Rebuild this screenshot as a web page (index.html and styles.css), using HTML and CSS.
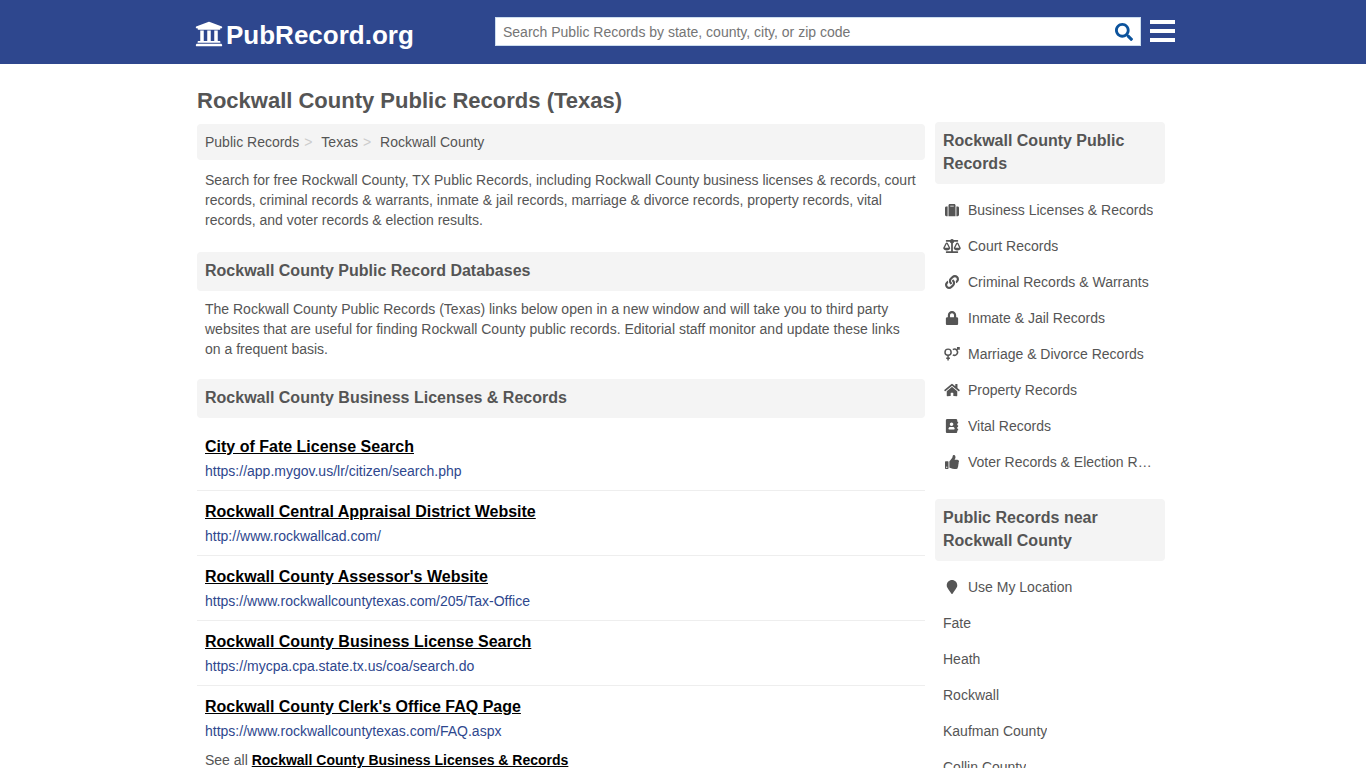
FILE: index.html
```html
<!DOCTYPE html>
<html lang="en">
<head>
  <title>Rockwall County Public Records (Texas)</title>
  <meta charset="UTF-8">
  <meta name="viewport" content="width=device-width, initial-scale=1.0">
  <link rel="stylesheet" href="styles.css">
</head>
<body>
  <header>
    <div class="container top">
      <a class="logo" href="#">
        <svg viewBox="0 0 512 512"><path d="M496 128v16a8 8 0 0 1-8 8h-24v12c0 6.627-5.373 12-12 12H60c-6.627 0-12-5.373-12-12v-12H24a8 8 0 0 1-8-8v-16a8 8 0 0 1 4.941-7.392l232-88a7.996 7.996 0 0 1 6.118 0l232 88A8 8 0 0 1 496 128zm-24 304H40c-13.255 0-24 10.745-24 24v16a8 8 0 0 0 8 8h464a8 8 0 0 0 8-8v-16c0-13.255-10.745-24-24-24zM96 192v192H60c-6.627 0-12 5.373-12 12v20h416v-20c0-6.627-5.373-12-12-12h-36V192h-64v192h-64V192h-64v192h-64V192H96z"/></svg>
        <span>PubRecord.org</span>
      </a>
      <form class="search">
        <input type="text" name="q" aria-label="Search Public Records" placeholder="Search Public Records by state, county, city, or zip code">
        <button type="button" aria-label="Search">
          <svg viewBox="0 0 512 512"><path d="M505 442.7L405.3 343c-4.5-4.5-10.6-7-17-7H372c27.600-35.300 44-79.700 44-128C416 93.100 322.900 0 208 0S0 93.100 0 208s93.100 208 208 208c48.300 0 92.700-16.400 128-44v16.300c0 6.400 2.500 12.500 7 17l99.700 99.700c9.400 9.400 24.600 9.400 33.900 0l28.300-28.300c9.400-9.400 9.400-24.600.1-34zM208 336c-70.700 0-128-57.200-128-128 0-70.700 57.200-128 128-128 70.700 0 128 57.200 128 128 0 70.700-57.200 128-128 128z"/></svg>
        </button>
      </form>
      <button class="menu" type="button" aria-label="Menu">
        <svg viewBox="0 0 25 24"><path d="M0 1h25v4H0zM0 10h25v4H0zM0 19h25v4H0z"/></svg>
      </button>
    </div>
  </header>

  <div class="container page">
    <h1>Rockwall County Public Records (Texas)</h1>
    <div class="columns">
      <main>
        <ol class="breadcrumb">
          <li><a href="#">Public Records</a></li>
          <li><a href="#">Texas</a></li>
          <li><a href="#">Rockwall County</a></li>
        </ol>
        <p class="intro">Search for free Rockwall County, TX Public Records, including Rockwall County business licenses &amp; records, court records, criminal records &amp; warrants, inmate &amp; jail records, marriage &amp; divorce records, property records, vital records, and voter records &amp; election results.</p>

        <h2>Rockwall County Public Record Databases</h2>
        <p>The Rockwall County Public Records (Texas) links below open in a new window and will take you to third party websites that are useful for finding Rockwall County public records. Editorial staff monitor and update these links on a frequent basis.</p>

        <h2>Rockwall County Business Licenses &amp; Records</h2>
        <ul class="links">
          <li>
            <a href="#">City of Fate License Search</a>
            <span>https://app.mygov.us/lr/citizen/search.php</span>
          </li>
          <li>
            <a href="#">Rockwall Central Appraisal District Website</a>
            <span>http://www.rockwallcad.com/</span>
          </li>
          <li>
            <a href="#">Rockwall County Assessor's Website</a>
            <span>https://www.rockwallcountytexas.com/205/Tax-Office</span>
          </li>
          <li>
            <a href="#">Rockwall County Business License Search</a>
            <span>https://mycpa.cpa.state.tx.us/coa/search.do</span>
          </li>
          <li>
            <a href="#">Rockwall County Clerk's Office FAQ Page</a>
            <span>https://www.rockwallcountytexas.com/FAQ.aspx</span>
          </li>
        </ul>
        <div class="see-all">See all <a href="#">Rockwall County Business Licenses &amp; Records</a></div>
      </main>

      <aside>
        <h2>Rockwall County Public Records</h2>
        <ul class="side-list">
          <li><a href="#">
            <svg viewBox="0 0 512 512"><path d="M128 480h256V80c0-26.500-21.500-48-48-48H176c-26.500 0-48 21.500-48 48v400zm64-384h128v32H192V96zm320 80v256c0 26.500-21.500 48-48 48h-48V128h48c26.500 0 48 21.500 48 48zM96 480H48c-26.500 0-48-21.500-48-48V176c0-26.500 21.500-48 48-48h48v352z"/></svg>
            <span>Business Licenses &amp; Records</span></a></li>
          <li><a href="#">
            <svg viewBox="0 0 640 512"><path d="M256 336h-.02c0-16.18 1.34-8.73-85.05-181.51-17.65-35.29-68.19-35.36-85.87 0C-2.06 328.75.02 320.33.02 336H0c0 44.18 57.31 80 128 80s128-35.82 128-80zM128 176l72 144H56l72-144zm511.98 160c0-16.18 1.34-8.73-85.05-181.51-17.65-35.29-68.19-35.36-85.87 0-87.12 174.26-85.04 165.84-85.04 181.51H384c0 44.18 57.31 80 128 80s128-35.82 128-80h-.02zM440 320l72-144 72 144H440zm88 128H352V153.25c23.51-10.29 41.16-31.48 46.39-57.25H528c8.84 0 16-7.16 16-16V48c0-8.84-7.16-16-16-16H383.64C369.04 12.68 346.09 0 320 0s-49.04 12.68-63.64 32H112c-8.84 0-16 7.16-16 16v32c0 8.84 7.16 16 16 16h129.61c5.23 25.76 22.87 46.96 46.39 57.25V448H112c-8.84 0-16 7.16-16 16v32c0 8.84 7.16 16 16 16h416c8.84 0 16-7.16 16-16v-32c0-8.84-7.16-16-16-16z"/></svg>
            <span>Court Records</span></a></li>
          <li><a href="#">
            <svg viewBox="0 0 512 512"><path d="M326.612 185.391c59.747 59.809 58.927 155.698.36 214.59-.11.12-.24.25-.36.37l-67.2 67.2c-59.27 59.27-155.699 59.262-214.96 0-59.27-59.26-59.27-155.7 0-214.96l37.106-37.106c9.84-9.84 26.786-3.3 27.294 10.606.648 17.722 3.826 35.527 9.69 52.721 1.986 5.822.567 12.262-3.783 16.612l-13.087 13.087c-28.026 28.026-28.905 73.66-1.155 101.96 28.024 28.579 74.086 28.749 102.325.51l67.2-67.19c28.191-28.191 28.073-73.757 0-101.83-3.701-3.694-7.429-6.564-10.341-8.569a16.037 16.037 0 0 1-6.947-12.606c-.396-10.567 3.348-21.456 11.698-29.806l21.054-21.055c5.521-5.521 14.182-6.199 20.584-1.731a152.482 152.482 0 0 1 20.522 17.197zM467.547 44.449c-59.261-59.262-155.69-59.27-214.96 0l-67.2 67.2c-.12.12-.25.25-.36.37-58.566 58.892-59.387 154.781.36 214.59a152.454 152.454 0 0 0 20.521 17.196c6.402 4.468 15.064 3.789 20.584-1.731l21.054-21.055c8.35-8.35 12.094-19.239 11.698-29.806a16.037 16.037 0 0 0-6.947-12.606c-2.912-2.005-6.64-4.875-10.341-8.569-28.073-28.073-28.191-73.639 0-101.83l67.2-67.19c28.239-28.239 74.3-28.069 102.325.51 27.75 28.3 26.872 73.934-1.155 101.96l-13.087 13.087c-4.35 4.35-5.769 10.79-3.783 16.612 5.864 17.194 9.042 34.999 9.69 52.721.509 13.906 17.454 20.446 27.294 10.606l37.106-37.106c59.271-59.259 59.271-155.699.001-214.959z"/></svg>
            <span>Criminal Records &amp; Warrants</span></a></li>
          <li><a href="#">
            <svg viewBox="0 0 448 512"><path d="M400 224h-24v-72C376 68.2 307.8 0 224 0S72 68.2 72 152v72H48c-26.500 0-48 21.500-48 48v192c0 26.500 21.500 48 48 48h352c26.500 0 48-21.500 48-48V272c0-26.500-21.500-48-48-48zm-104 0H152v-72c0-39.700 32.300-72 72-72s72 32.300 72 72v72z"/></svg>
            <span>Inmate &amp; Jail Records</span></a></li>
          <li><a href="#">
            <svg class="outline" viewBox="0 0 576 512"><circle cx="144" cy="190" r="112"/><path d="M144 302v194M76 410h136M318 285a112 112 0 1 0 0-190M458 110l78-78M470 28h76v76"/></svg>
            <span>Marriage &amp; Divorce Records</span></a></li>
          <li><a href="#">
            <svg viewBox="0 0 576 512"><path d="M280.370 148.260L96 300.110V464a16 16 0 0 0 16 16l112.060-.29a16 16 0 0 0 15.920-16V368a16 16 0 0 1 16-16h64a16 16 0 0 1 16 16v95.640a16 16 0 0 0 16 16.050L464 480a16 16 0 0 0 16-16V300L295.670 148.260a12.190 12.190 0 0 0-15.300 0zM571.600 251.470L488 182.560V44.050a12 12 0 0 0-12-12h-56a12 12 0 0 0-12 12v72.610L318.470 43a48 48 0 0 0-61 0L4.340 251.470a12 12 0 0 0-1.600 16.900l25.500 31A12 12 0 0 0 45.150 301l235.220-193.740a12.190 12.190 0 0 1 15.300 0L530.900 301a12 12 0 0 0 16.900-1.600l25.500-31a12 12 0 0 0-1.700-16.930z"/></svg>
            <span>Property Records</span></a></li>
          <li><a href="#">
            <svg viewBox="0 0 448 512"><path d="M436 160c6.600 0 12-5.400 12-12v-40c0-6.600-5.400-12-12-12h-20V48c0-26.500-21.500-48-48-48H48C21.500 0 0 21.500 0 48v416c0 26.500 21.500 48 48 48h320c26.500 0 48-21.500 48-48v-48h20c6.600 0 12-5.400 12-12v-40c0-6.600-5.400-12-12-12h-20v-64h20c6.600 0 12-5.400 12-12v-40c0-6.600-5.400-12-12-12h-20v-64h20zm-228-32c35.300 0 64 28.700 64 64s-28.700 64-64 64-64-28.700-64-64 28.700-64 64-64zm112 236.800c0 10.600-10 19.200-22.400 19.200H118.400C106 384 96 375.400 96 364.800v-19.200c0-31.800 30.100-57.600 67.200-57.600h5c12.300 5.100 25.700 8 39.800 8s27.600-2.900 39.800-8h5c37.100 0 67.200 25.800 67.200 57.600v19.200z"/></svg>
            <span>Vital Records</span></a></li>
          <li><a href="#">
            <svg viewBox="0 0 512 512"><path d="M104 224H24c-13.255 0-24 10.745-24 24v240c0 13.255 10.745 24 24 24h80c13.255 0 24-10.745 24-24V248c0-13.255-10.745-24-24-24zM64 472c-13.255 0-24-10.745-24-24s10.745-24 24-24 24 10.745 24 24-10.745 24-24 24zM384 81.452c0 42.416-25.970 66.208-33.277 94.548h101.723c33.397 0 59.397 27.746 59.553 58.098.084 17.938-7.546 37.249-19.439 49.197l-.11.11c9.836 23.337 8.237 56.037-9.308 79.469 8.681 25.895-.069 57.704-16.382 74.757 4.298 17.598 2.244 32.575-6.148 44.632C440.202 511.587 389.616 512 346.839 512l-2.845-.001c-48.287-.017-87.806-17.598-119.560-31.725-15.957-7.099-36.821-15.887-52.651-16.178-6.540-.12-11.783-5.457-11.783-11.998v-213.770c0-3.200 1.282-6.271 3.558-8.521 39.614-39.144 56.648-80.587 89.117-113.111 14.804-14.832 20.188-37.236 25.393-58.902C282.515 39.293 291.817 0 312 0c24 0 72 8 72 81.452z"/></svg>
            <span>Voter Records &amp; Election Results</span></a></li>
        </ul>

        <h2>Public Records near Rockwall County</h2>
        <ul class="side-list">
          <li><a href="#">
            <svg viewBox="0 0 384 512"><path d="M172.268 501.670C26.970 291.031 0 269.413 0 192 0 85.961 85.961 0 192 0s192 85.961 192 192c0 77.413-26.970 99.031-172.268 309.670-9.535 13.774-29.930 13.773-39.464 0z"/></svg>
            <span>Use My Location</span></a></li>
          <li><a href="#"><span>Fate</span></a></li>
          <li><a href="#"><span>Heath</span></a></li>
          <li><a href="#"><span>Rockwall</span></a></li>
          <li><a href="#"><span>Kaufman County</span></a></li>
          <li><a href="#"><span>Collin County</span></a></li>
        </ul>
      </aside>
    </div>
  </div>
</body>
</html>
```
FILE: styles.css
```css
* {
  box-sizing: border-box;
}

body {
  margin: 0;
  font-family: "Liberation Sans", Arial, sans-serif;
  font-size: 14px;
  line-height: 20px;
  color: #555;
  background-color: #fff;
}

ul, ol {
  list-style: none;
  margin: 0;
  padding: 0;
}

a {
  color: inherit;
  text-decoration: none;
}

svg {
  display: block;
  fill: currentColor;
}

.container {
  max-width: 980px;
  margin: 0 auto;
}

/* header */
header {
  background-color: #2e478e;
  color: #fff;
}

.top {
  display: flex;
  align-items: center;
  height: 64px;
  padding-bottom: 2px;
}

.logo {
  display: flex;
  align-items: center;
  gap: 3px;
  width: 302px;
  padding: 8px 0 0 2px;
  font-size: 26px;
  line-height: 30px;
  font-weight: bold;
}

.logo svg {
  width: 28px;
  height: 28px;
  margin-bottom: 2px;
}

.search {
  display: flex;
  flex: 1;
  height: 29px;
  background-color: #fff;
  border: 1px solid #cde;
}

.search input {
  flex: 1;
  min-width: 0;
  border: 0;
  padding: 2px 7px 0;
  background: none;
  font: inherit;
  color: #555;
}

.search input::placeholder {
  color: #757575;
}

.search button, .menu {
  border: 0;
  padding: 0;
  background: none;
  cursor: pointer;
}

.search button {
  padding: 2px 7px 0;
  color: #0c539c;
}

.search button svg {
  width: 18px;
  height: 18px;
}

.menu {
  margin: 0 -2px 0 9px;
  color: #fff;
}

.menu svg {
  width: 25px;
  height: 24px;
}

/* page */
.page {
  padding: 24px 8px 0 4px;
}

h1 {
  margin: 0 0 8px;
  font-size: 22px;
  line-height: 26px;
}

.columns {
  display: grid;
  grid-template-columns: 1fr 230px;
  gap: 10px;
}

main {
  padding-top: 2px;
}

h2 {
  margin: 0 0 8px;
  padding: 7px 8px 9px;
  font-size: 16px;
  line-height: 23px;
  background-color: #f4f4f4;
  border-radius: 4px;
}

p {
  margin: 0 0 20px;
  padding: 0 8px;
}

.intro {
  margin-bottom: 22px;
}

.breadcrumb {
  display: flex;
  margin-bottom: 10px;
  padding: 8px;
  background-color: #f4f4f4;
  border-radius: 4px;
}

.breadcrumb li + li::before {
  content: ">";
  padding: 0 9px 0 5px;
  color: #ccc;
}

.links li {
  padding: 8px 8px 6px;
  line-height: 25px;
  border-bottom: 1px solid #eee;
}

.links li:last-child {
  border-bottom: 0;
}

.links a {
  display: table;
  font-size: 16px;
}

.links a, .see-all a {
  color: #000;
  font-weight: bold;
  text-decoration: underline;
}

.links span {
  display: block;
  color: #2e478e;
}

.see-all {
  padding: 0 8px;
}

/* sidebar */
.side-list {
  margin-bottom: 19px;
}

.side-list a {
  display: flex;
  align-items: center;
  gap: 7px;
  padding: 8px 10px 8px 8px;
}

.side-list svg {
  flex: none;
  width: 18px;
  height: 14px;
}

.side-list span {
  overflow: hidden;
  white-space: nowrap;
  text-overflow: ellipsis;
}

.side-list .outline {
  fill: none;
  stroke: currentColor;
  stroke-width: 54px;
}
```
